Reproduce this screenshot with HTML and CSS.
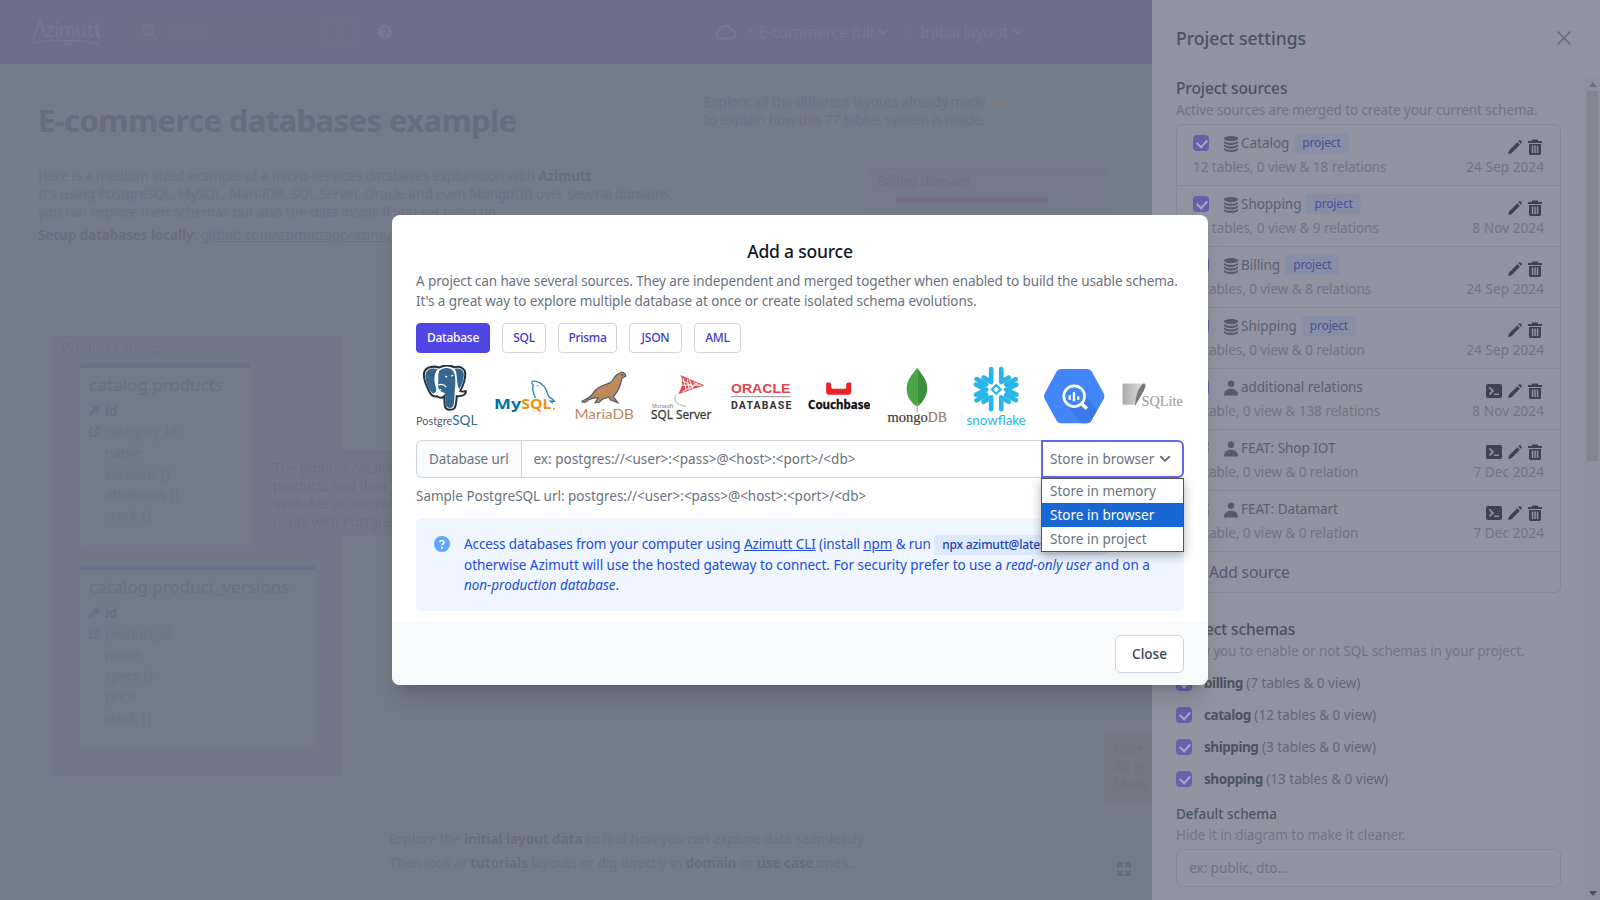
FILE: index.html
```html
<!DOCTYPE html>
<html lang="en">
<head>
<meta charset="utf-8">
<title>Azimutt - E-commerce full</title>
<link rel="stylesheet" href="styles.css">
</head>
<body>
<svg class="defs" width="0" height="0">
  <symbol id="db" viewBox="0 0 14 16"><path d="M0 2.600C0 1.100 3.100 0 7 0s7 1.100 7 2.600S10.900 5.200 7 5.200 0 4.100 0 2.600z"/><path d="M0 4.900c1.400 1.300 4 1.900 7 1.900s5.600-.6 7-1.900v1.300c0 1.500-3.100 2.700-7 2.700S0 7.700 0 6.200z"/><path d="M0 8.400c1.400 1.300 4 1.900 7 1.900s5.600-.6 7-1.900v1.300c0 1.500-3.100 2.700-7 2.700S0 11.200 0 9.700z"/><path d="M0 11.900c1.400 1.300 4 1.900 7 1.900s5.600-.6 7-1.900v1.400C14 14.800 10.900 16 7 16s-7-1.200-7-2.700z"/></symbol>
  <symbol id="user" viewBox="0 0 14 16"><circle cx="7" cy="3.700" r="3.200"/><path d="M0 15.500C0 11 2.800 8.800 7 8.800s7 2.200 7 6.700z"/></symbol>
  <symbol id="pen" viewBox="0 0 16 16"><path d="M12.200 1.300a2 2 0 0 1 2.500 2.500l-.9.9-2.500-2.500zM10.300 3.200l2.500 2.500-8.300 8.600-3.400.8.800-3.300z"/></symbol>
  <symbol id="trash" viewBox="0 0 14 16"><path fill-rule="evenodd" d="M4.300.6h5.400l.6 1.400H14v2H0V2h3.700zM1 5h12v9.300c0 1-.6 1.700-1.600 1.700H2.600C1.600 16 1 15.300 1 14.300zm2.800 1.400v7.600h1.500V6.400zm2.500 0v7.600h1.500V6.400zm2.500 0v7.600h1.500V6.400z"/></symbol>
  <symbol id="term" viewBox="0 0 16 15"><path fill-rule="evenodd" d="M2 .5h12a2 2 0 0 1 2 2v10a2 2 0 0 1-2 2H2a2 2 0 0 1-2-2v-10a2 2 0 0 1 2-2zm.8 4L5.700 7.400l-2.900 2.900 1.200 1.200 4.100-4.100L4 3.300zM8 10v1.600h5V10z"/></symbol>
  <symbol id="chev" viewBox="0 0 12 8"><path d="M1.800 1.700 6 5.900l4.200-4.200" fill="none" stroke="currentColor" stroke-width="2" stroke-linecap="round" stroke-linejoin="round"/></symbol>
  <symbol id="key" viewBox="0 0 12 12"><path d="M7.800.6a3.600 3.600 0 1 1-1 7L5 9.200H3.700v1.300H2.300V12H0V9.500l4.500-4.300A3.600 3.600 0 0 1 7.800.6z"/></symbol>
  <symbol id="link" viewBox="0 0 12 12"><path d="M6 2H1.500v8.500H10V6M7.500 1H11v3.500M11 1 5.500 6.500" fill="none" stroke="currentColor" stroke-width="1.500"/></symbol>
</svg>
<div class="app">
  <div class="workspace">
    <header class="topbar">
      <svg class="brand" viewBox="0 0 70 30"><g fill="none" stroke="currentColor" stroke-width="1.800"><path d="M1 22 8 3l6 18M31 24h9M1 26q16-4 31-2M39 24q15-1 28 4M32 27h7M64 5l3 17"/></g><text x="13" y="20" font-size="21" textLength="56">zimutt</text></svg>
      <div class="search">
        <svg class="i18" viewBox="0 0 18 18"><path d="m11 11 5.500 5.500M12.500 7a5 5 0 1 1-10 0 5 5 0 0 1 10 0z" fill="none" stroke="currentColor" stroke-width="2.400"/></svg>
        <span class="search-text">Search</span><kbd>/</kbd>
      </div>
      <svg class="help" viewBox="0 0 16 16"><path fill="currentColor" d="M8 1a7 7 0 1 0 0 14A7 7 0 0 0 8 1z"/><path d="M5.700 6c.3-3 4.900-2.500 4.500.2C10 7.600 8 7.800 8 9.700M8 11v1.800" fill="none" stroke="#6b6f8b" stroke-width="1.600"/></svg>
      <nav class="crumbs">
        <svg class="cloud" viewBox="0 0 22 18"><path d="M5 15.500a4 4 0 0 1-.6-7.800 6 6 0 0 1 11.600-1 4.500 4.500 0 0 1 1 8.800z" fill="none" stroke="currentColor" stroke-width="2"/></svg>
        <span class="crumb-project">* E-commerce full</span><svg class="cv"><use href="#chev"/></svg>
        <span class="slash">/</span>
        <span>Initial layout</span><svg class="cv"><use href="#chev"/></svg>
      </nav>
    </header>
    <main class="canvas">
      <h1 class="node intro-title">E-commerce databases example</h1>
      <div class="node intro">Here is a medium sized example of a micro-services databases exploration with <b>Azimutt</b>.<br>It's using PostgreSQL, MySQL, MariaDB, SQL Server, Oracle and even MongoDB over several domains,<br>you can explore their schemas but also the data inside if you set them up.</div>
      <div class="node setup"><b>Setup databases locally</b>: <u>github.com/azimuttapp/azimutt</u></div>
      <div class="node layouts">Explore all the different layouts already made <i class="spark"></i><br>to explain how this 77 tables system is made.</div>
      <div class="node group-billing"><span>Billing domain</span><div class="billing-bar"></div></div>
      <div class="node group-catalog"><span>Product catalog</span></div>
      <section class="node table products">
        <h2>catalog.products</h2>
        <p class="col"><svg><use href="#key"/></svg><b>id</b></p>
        <p class="col"><svg><use href="#link"/></svg>category_id</p>
        <p class="col plain">name</p><p class="col plain">versions {}</p><p class="col plain">attributes {}</p><p class="col plain">stock {}</p>
      </section>
      <section class="node table versions">
        <h2>catalog.product_versions</h2>
        <p class="col"><svg><use href="#key"/></svg><b>id</b></p>
        <p class="col"><svg><use href="#link"/></svg>product_id</p>
        <p class="col plain">name</p><p class="col plain">specs {}</p><p class="col plain">price</p><p class="col plain">stock {}</p>
      </section>
      <div class="node memo">The product catalog with<br>products and their versions<br>available on the website is<br>made with PostgreSQL</div>
      <div class="node memo-warm">User<br>All us<br>Made</div>
      <div class="node tips">Explore the <b>initial layout data</b> to find how you can explore data seamlessly.<br>Then look at <b>tutorials</b> layouts or dig directly in <b>domain</b> or <b>use case</b> ones...</div>
      <svg class="node fit" viewBox="0 0 14 14"><path d="M0 0h6v2.500H4L6 5 5 6 2.500 4v2H0zM14 0v6h-2.500V4L9 6 8 5l2-2.500H8V0zM0 14V8h2.500v2L5 8l1 1-2 2.500h2V14zM14 14H8v-2.500h2L8 9l1-1 2.500 2V8H14z" fill="currentColor"/></svg>
    </main>
  </div>

  <aside class="settings">
    <div class="settings-head"><h2>Project settings</h2><svg viewBox="0 0 16 16"><path d="m1.500 1.500 13 13m0-13-13 13" fill="none" stroke="currentColor" stroke-width="1.600"/></svg></div>
    <div class="settings-scroll">
      <div class="settings-body">
        <h3>Project sources</h3>
        <p class="hint">Active sources are merged to create your current schema.</p>
        <div class="sources">
          <div class="source"><div class="line"><i class="check"></i><svg class="kind"><use href="#db"/></svg><span class="name">Catalog</span><em>project</em><span class="acts"><svg class="pen"><use href="#pen"/></svg><svg class="trash"><use href="#trash"/></svg></span></div><div class="meta"><span>12 tables, 0 view &amp; 18 relations</span><span class="date">24 Sep 2024</span></div></div>
          <div class="source"><div class="line"><i class="check"></i><svg class="kind"><use href="#db"/></svg><span class="name">Shopping</span><em>project</em><span class="acts"><svg class="pen"><use href="#pen"/></svg><svg class="trash"><use href="#trash"/></svg></span></div><div class="meta"><span>13 tables, 0 view &amp; 9 relations</span><span class="date">8 Nov 2024</span></div></div>
          <div class="source"><div class="line"><i class="check"></i><svg class="kind"><use href="#db"/></svg><span class="name">Billing</span><em>project</em><span class="acts"><svg class="pen"><use href="#pen"/></svg><svg class="trash"><use href="#trash"/></svg></span></div><div class="meta"><span>7 tables, 0 view &amp; 8 relations</span><span class="date">24 Sep 2024</span></div></div>
          <div class="source"><div class="line"><i class="check"></i><svg class="kind"><use href="#db"/></svg><span class="name">Shipping</span><em>project</em><span class="acts"><svg class="pen"><use href="#pen"/></svg><svg class="trash"><use href="#trash"/></svg></span></div><div class="meta"><span>3 tables, 0 view &amp; 0 relation</span><span class="date">24 Sep 2024</span></div></div>
          <div class="source"><div class="line"><i class="check"></i><svg class="kind"><use href="#user"/></svg><span class="name">additional relations</span><span class="acts"><svg class="term"><use href="#term"/></svg><svg class="pen"><use href="#pen"/></svg><svg class="trash"><use href="#trash"/></svg></span></div><div class="meta"><span>0 table, 0 view &amp; 138 relations</span><span class="date">8 Nov 2024</span></div></div>
          <div class="source"><div class="line"><i class="check off"></i><svg class="kind"><use href="#user"/></svg><span class="name">FEAT: Shop IOT</span><span class="acts"><svg class="term"><use href="#term"/></svg><svg class="pen"><use href="#pen"/></svg><svg class="trash"><use href="#trash"/></svg></span></div><div class="meta"><span>0 table, 0 view &amp; 0 relation</span><span class="date">7 Dec 2024</span></div></div>
          <div class="source"><div class="line"><i class="check off"></i><svg class="kind"><use href="#user"/></svg><span class="name">FEAT: Datamart</span><span class="acts"><svg class="term"><use href="#term"/></svg><svg class="pen"><use href="#pen"/></svg><svg class="trash"><use href="#trash"/></svg></span></div><div class="meta"><span>0 table, 0 view &amp; 0 relation</span><span class="date">7 Dec 2024</span></div></div>
          <div class="add-source">Add source</div>
        </div>
        <h3 class="schemas-title">Project schemas</h3>
        <p class="hint">Allow you to enable or not SQL schemas in your project.</p>
        <div class="schemas">
          <label><i class="check"></i><span><b>billing</b> (7 tables &amp; 0 view)</span></label>
          <label><i class="check"></i><span><b>catalog</b> (12 tables &amp; 0 view)</span></label>
          <label><i class="check"></i><span><b>shipping</b> (3 tables &amp; 0 view)</span></label>
          <label><i class="check"></i><span><b>shopping</b> (13 tables &amp; 0 view)</span></label>
        </div>
        <h4>Default schema</h4>
        <p class="hint">Hide it in diagram to make it cleaner.</p>
        <div class="field">ex: public, dto...</div>
      </div>
      <div class="scrollbar"><i class="up"></i><div class="thumb"></div><i class="down"></i></div>
    </div>
  </aside>
</div>

<div class="modal">
  <div class="modal-body">
    <h2>Add a source</h2>
    <p class="desc">A project can have several sources. They are independent and merged together when enabled to build the usable schema.<br>It's a great way to explore multiple database at once or create isolated schema evolutions.</p>
    <div class="tabs"><span class="tab t-db active">Database</span><span class="tab t-sql">SQL</span><span class="tab t-prisma">Prisma</span><span class="tab t-json">JSON</span><span class="tab t-aml">AML</span></div>
    <div class="logos">
      <svg viewBox="0 0 62 62">
        <path d="M8 8C9 2 17 .5 23 2.500 28 0 34 0 38 2.300c6-1.600 11 1.200 11 6.700 0 7-3 13-5 17 2 1 4 .3 5.500 0 .5 3-3 5.500-9 5-.5 5-.5 9-2 11.500-2 3-8 2.500-9.500-.5-1-3-.5-7-1-11-2 2-5 1.500-7 0-3 1-6 0-8.500-6C10 20 7 13 8 8z" fill="#fff" stroke="#26323c" stroke-width="2"/>
        <path d="M9.500 9C10.500 4 16 2.500 21.500 4 17 10 18 17 20 23c.5 3-.5 5-2.500 5.500C13 27 8.500 15 9.500 9zM23 6c4-4 11-4 14 0 2.500 4 2.500 13 1.500 19-.5 6 0 12-1.500 16-1.500 2.500-6 2-7-.5-1-3-.5-9-1.500-13-4.500 0-7.500-4-6.500-9 .5-4-.5-8 1-12.500zM38.500 4c5-1.500 9 1 9 5.500 0 6-2.500 11-4.500 14.500C39.500 18 42 10 38.500 4z" fill="#336791"/>
        <path d="M25 24c-2 2-5 3-7 5m22-1 7 0M29 11l2 1m4-1 2-1M22 20q5-2 8 2" fill="none" stroke="#fff" stroke-width="1.300"/>
        <text x="0" y="60" font-size="12" textLength="36" lengthAdjust="spacingAndGlyphs" class="lato" fill="#555b66">Postgre</text><text x="36" y="60" font-size="12.500" textLength="25" lengthAdjust="spacingAndGlyphs" class="lato" fill="#336791">SQL</text>
      </svg>
      <svg viewBox="0 0 62 62">
        <path d="M41 33c-1-5-4-8-2-13-2-2-1.500-4 0-4 5 0 10 3 13 9 1 3 1.500 5 3 7 3 1.500 4 3 5 4l-4 0 2.500 2" fill="none" stroke="#2a8aa8" stroke-width="1.400"/><path d="m43 20 1 1" stroke="#2a8aa8"/>
        <text x="0" y="44" font-size="14.500" textLength="27" lengthAdjust="spacingAndGlyphs" class="bold" fill="#0072a3">My</text><text x="27" y="44" font-size="14.500" textLength="30" lengthAdjust="spacingAndGlyphs" class="bold" fill="#f29111">SQL</text><circle cx="59.500" cy="43.500" r="1" fill="#f29111"/>
      </svg>
      <svg viewBox="0 0 62 62">
        <path d="M9 36c2-1.500 7-2 11-8 4-6.500 10-7.500 17-10.500C41 15 41 9 46 8.500c2-2 4-1.500 5.500 0l1 2.500-4 2.500c-1 7-4 13-8.500 18l4.500 6-7.500-3-1-2.500-6 1.500-4 3.500-4 .5 3-4.500c-5-1-9 1-12 3.500-1.500.5-3 1-4 0z" fill="#bf8a5a" stroke="#4e5b6d" stroke-width="1.200"/><circle cx="49" cy="10" r=".8" fill="#333"/>
        <text x="1.500" y="53.500" font-size="14" textLength="59" lengthAdjust="spacingAndGlyphs" class="lato" fill="#c0875f">MariaDB</text>
      </svg>
      <svg viewBox="0 0 62 62">
        <path d="m29 10 24 10-26 9c3-5 6-14 2-19z" fill="#d6525b"/><path d="m32 13 3 12m3-11 4 10m0-7 5 3M30 20l20 0M31 15l10 6-10 6M36 14l2 11M47 17l-8 7" fill="none" stroke="#fff" stroke-width=".9"/><path d="M25 30c-3 5 0 10 10 11" fill="none" stroke="#c9ced4" stroke-width="1.500"/>
        <text x="1" y="42.500" font-size="5.500" textLength="21" lengthAdjust="spacingAndGlyphs" fill="#777">Microsoft</text><text x="0" y="54" font-size="13" textLength="60" lengthAdjust="spacingAndGlyphs" fill="#3b3b3b" stroke="#3b3b3b" stroke-width=".25">SQL Server</text>
      </svg>
      <svg viewBox="0 0 62 62">
        <text x="1" y="27.500" font-size="12" textLength="59" lengthAdjust="spacingAndGlyphs" class="wide" fill="#e8414a">ORACLE</text><path d="M1 31.500h59" stroke="#777" stroke-width=".8"/><text x="1" y="43.500" font-size="10.500" textLength="60" class="narrow" fill="#333">DATABASE</text>
      </svg>
      <svg viewBox="0 0 62 62">
        <path d="M18 18.500c0-1 1-1.300 3-1 2 0 2 2 2 4 0 1.500.5 2 2 2h11c1.500 0 2-.5 2-2 0-2 0-4 2-4 2-.3 3 0 3 1v7c0 3-1 4-3 4H21c-2 0-3-1-3-4z" fill="#ea2328"/>
        <text x="0" y="43.500" font-size="12" textLength="62" lengthAdjust="spacingAndGlyphs" class="bold" fill="#111" stroke="#111" stroke-width=".3">Couchbase</text>
      </svg>
      <svg viewBox="0 0 62 62">
        <path d="M31 2.500c4 7 10 11 10 21 0 7-4 13-10 18z" fill="#3e8f3c"/><path d="M31 2.500C27 9 20.500 14 20.500 23.500S26 38 31 41.500z" fill="#4aa546"/><path d="M31 38v9" stroke="#8fb58a" stroke-width="1"/>
        <text x="1.500" y="57" font-size="14" textLength="40" lengthAdjust="spacingAndGlyphs" class="serif" fill="#493a32" stroke="#493a32" stroke-width=".2">mongo</text><text x="41.500" y="57" font-size="14.500" textLength="19" lengthAdjust="spacingAndGlyphs" class="serif" fill="#947b63" stroke="#947b63" stroke-width=".2">DB</text>
      </svg>
      <svg viewBox="0 0 62 62">
        <g fill="none" stroke="#29b5e8" stroke-width="4.600" stroke-linecap="round" stroke-linejoin="round"><path d="M26 4v13L18.500 12.500M36 4v13l7.500-4.500M26 44V32l-7.500 4.500M36 44V32l7.500 4.500M11.500 14 21 19.500l-9 .5M50.500 14 41 19.500l9 .5M11 19.500l10 5-10 5M51 19.500l-10 5 10 5M11.500 35 21 29.500l-9-.5M50.500 35 41 29.500l9-.5"/></g><circle cx="31" cy="24.500" r="6.500" fill="#fff"/><path d="m31 20 4.300 4.300L31 28.600l-4.300-4.300z" fill="#fff" stroke="#29b5e8" stroke-width="2.200"/>
        <text x="1.500" y="60" font-size="12.500" textLength="59" lengthAdjust="spacingAndGlyphs" class="lato" fill="#29b5e8">snowflake</text>
      </svg>
      <svg viewBox="0 0 62 62">
        <path d="M18 4h26q3 0 4.500 2.500l12 22q1.200 2.500 0 5l-12 21Q47 58 44 58H18q-3 0-4.500-2.500l-12-22q-1.200-2.500 0-5l12-22Q15 4 18 4z" fill="#4386fa"/><path d="m39 24 14.500 21.500-5.500 10-4 2.500h-6L24 40z" fill="#3b79e6"/>
        <circle cx="31" cy="31" r="10.300" fill="#4386fa" stroke="#fff" stroke-width="2.700"/><path d="m38 38 5.500 5.500" stroke="#fff" stroke-width="3.500"/><path d="M26.500 30v4.500M30.800 27v9M35 31v3.500" stroke="#fff" stroke-width="2.400"/>
      </svg>
      <svg viewBox="0 0 62 62">
        <defs><linearGradient id="sq"><stop offset="0" stop-color="#aaa"/><stop offset="1" stop-color="#ddd"/></linearGradient></defs>
        <path d="M2 18.500q-1.500 0-1.500 1.500v18q0 1.500 1.500 1.500h11q1-12 7-21z" fill="url(#sq)"/><path d="M13 41c0-8 3-19 8-22.500 2-.5 3 1 2 3.500-2 6-6 11-10 19z" fill="#777"/>
        <text x="19.500" y="41" font-size="13.500" textLength="41" lengthAdjust="spacingAndGlyphs" class="serif" fill="#a3a3a3" stroke="#a3a3a3" stroke-width=".2">SQLite</text>
      </svg>
    </div>
    <div class="url-row">
      <span class="addon">Database url</span><span class="url">ex: postgres://&lt;user&gt;:&lt;pass&gt;@&lt;host&gt;:&lt;port&gt;/&lt;db&gt;</span>
      <div class="select"><span>Store in browser</span><svg><use href="#chev"/></svg>
        <ul class="options"><li>Store in memory</li><li class="on">Store in browser</li><li>Store in project</li></ul>
      </div>
    </div>
    <p class="sample">Sample PostgreSQL url: postgres://&lt;user&gt;:&lt;pass&gt;@&lt;host&gt;:&lt;port&gt;/&lt;db&gt;</p>
    <div class="info">
      <svg viewBox="0 0 16 16"><circle cx="8" cy="8" r="8" fill="#60a5fa"/><path d="M5.900 6.300C6 3.800 10.200 3.900 10 6.500 9.900 7.900 8 8 8 9.600M8 11v1.700" fill="none" stroke="#fff" stroke-width="1.700"/></svg>
      <div><div class="l1">Access databases from your computer using <u>Azimutt CLI</u> (install <u>npm</u> &amp; run <code>npx azimutt@latest gateway</code>),</div><div class="l2">otherwise Azimutt will use the hosted gateway to connect. For security prefer to use a <i>read-only user</i> and on a</div><div class="l3"><i>non-production database</i>.</div></div>
    </div>
  </div>
  <footer><button>Close</button></footer>
</div>
</body>
</html>
```
FILE: styles.css
```css
* { box-sizing: border-box; margin: 0; padding: 0; }
body { width: 1600px; height: 900px; overflow: hidden; position: relative; font: 13.5px/20px "Noto Sans", sans-serif; letter-spacing: -.1px; color: #5e6676; }
.defs { position: absolute; }
h1, h2, h3, h4 { font-weight: 500; }
.app { display: flex; height: 900px; }
.workspace { width: 1152px; display: flex; flex-direction: column; }

/* top bar */
.topbar { height: 64px; background: #6b6f8b; color: #73778f; display: flex; align-items: center; padding-left: 32px; }
.brand { width: 70px; height: 30px; }
.brand text { fill: currentColor; font-family: Lato, sans-serif; }
.search { display: flex; align-items: center; width: 229px; height: 32px; margin-left: 24px; padding-left: 14px; background: #6b6f8a; border-radius: 6px; color: #727689; }
.i18 { width: 18px; height: 18px; }
.search-text { margin-left: 9px; flex: 1; color: #6f7389; }
kbd { width: 28px; height: 28px; border: 1px solid #6f738a; border-radius: 4px; text-align: center; line-height: 26px; font-family: inherit; color: #6f738a; }
.help { width: 16px; height: 16px; margin-left: 22px; color: #76798c; }
.crumbs { display: flex; align-items: center; margin-left: 322px; font-size: 16px; letter-spacing: -.4px; white-space: nowrap; color: #747890; }
.cloud { width: 22px; height: 18px; margin-right: 9px; }
.cv { width: 12px; height: 8px; margin-left: 4px; }
.slash { margin: 0 11px 0 14px; color: #70748e; }

/* diagram canvas */
.canvas { position: relative; flex: 1; background: #747b89; color: #6c7383; overflow: hidden; }
.node { position: absolute; white-space: nowrap; }
.canvas b { color: #676e7e; font-weight: 700; }
.intro-title { left: 38px; top: 36px; font-size: 31px; line-height: 40px; font-weight: 700; letter-spacing: -.6px; color: #666d7d; }
.intro { left: 38px; top: 103px; line-height: 18px; letter-spacing: -.06px; }
.setup { left: 38px; top: 161px; }
.layouts { left: 704px; top: 29px; line-height: 18px; }
.spark { display: inline-block; width: 8px; height: 8px; margin-left: 8px; background: #807b7c; border-radius: 4px; }
.group-billing { left: 868px; top: 104px; width: 240px; height: 482px; padding: 2px 8px; background: #747a89; border: 1px solid #727889; color: #746f84; font-size: 14px; }
.billing-bar { width: 152px; height: 6px; margin: 6px 0 0 19px; background: #78708b; }
.group-catalog { left: 52px; top: 272px; width: 290px; height: 440px; padding: 1px 9px; background: #727888; border: 1px solid #6f7688; color: #6b7289; }
.table { background: #737a88; border-top: 5px solid #687389; border-radius: 4px; padding: 7px 9px; color: #6e7585; }
.products { left: 80px; top: 299px; width: 170px; height: 187px; }
.versions { left: 80px; top: 501px; width: 235px; height: 184px; }
.table h2 { font-size: 17px; line-height: 20px; margin-bottom: 5px; letter-spacing: -.15px; color: #6a7180; }
.col { display: flex; align-items: center; height: 21px; }
.col b { font-weight: 600; }
.col svg { width: 11px; height: 11px; margin-right: 5px; fill: currentColor; color: #697188; }
.plain { padding-left: 16px; }
.memo { left: 264px; top: 386px; width: 200px; height: 86px; padding: 9px; line-height: 18px; background: #717787; color: #6a7182; }
.memo-warm { left: 1104px; top: 669px; width: 60px; height: 70px; padding: 8px 10px; line-height: 17.500px; background: #767984; color: #6f7481; }
.tips { left: 389px; top: 763px; line-height: 24px; letter-spacing: -.04px; }
.fit { left: 1117px; top: 798px; width: 14px; height: 14px; color: #656c7c; }

/* settings panel */
.settings { width: 448px; background: #9193a0; display: flex; flex-direction: column; color: #686d7c; }
.settings-head { height: 76px; padding: 0 28px 0 24px; display: flex; align-items: center; justify-content: space-between; color: #4b5160; }
.settings-head h2 { font-size: 17.500px; letter-spacing: 0; }
.settings-head svg { width: 16px; height: 16px; color: #666b7a; }
.settings-scroll { display: flex; height: 824px; }
.settings-body { width: 433px; padding: 0 24px; }
h3 { font-size: 15.500px; line-height: 24px; color: #4b5160; }
.settings h3 { letter-spacing: -.1px; }
.hint { line-height: 20px; color: #707583; letter-spacing: -.08px; }
.sources { width: 385px; margin-top: 4px; border: 1px solid #868995; border-radius: 6px; }
.source { height: 61px; padding: 7px 16px 0 16px; border-bottom: 1px solid #868995; }
.line { display: flex; align-items: center; height: 22px; }
.check { flex: none; width: 16px; height: 16px; border-radius: 4px; background: #6461aa; position: relative; }
.check::after { content: ""; position: absolute; left: 4px; top: 4px; width: 8px; height: 5px; border: solid #a9aac0; border-width: 0 0 2.500px 2.500px; transform: rotate(-47deg); }
.off { background: #9193a0; border: 1px solid #7a7e8c; }
.kind { width: 14px; height: 16px; margin: 2px 3px 0 15px; fill: #555b69; }
.name { color: #5b606e; letter-spacing: -.03px; }
.line em { font-style: normal; font-size: 12px; height: 20px; line-height: 20px; padding: 0 8px; margin-left: 5px; border-radius: 3px; background: #868fa6; color: #484f96; letter-spacing: -.15px; }
.acts { margin-left: auto; display: flex; gap: 5px; padding-right: 2px; fill: #3f4350; transform: translateY(4px); }
.acts svg { height: 16px; }
.pen, .term { width: 16px; }
.trash { width: 14px; }
.meta { display: flex; justify-content: space-between; line-height: 20px; margin-top: 3px; color: #707583; letter-spacing: -.05px; }
.date { letter-spacing: .1px; }
.add-source { height: 40px; line-height: 41px; padding-left: 32px; font-size: 15.500px; color: #555a69; }
.schemas-title { margin-top: 24px; }
.schemas { padding: 6px 0; }
.schemas label { display: flex; align-items: center; gap: 12px; height: 32px; color: #626776; letter-spacing: 0; }
.schemas b { color: #4d5362; font-weight: 700; letter-spacing: -.45px; }
h4 { margin-top: 2px; font-size: 13.500px; line-height: 22px; color: #4d5362; letter-spacing: 0; }
.field { width: 385px; height: 38px; margin-top: 4px; padding: 0 12px; line-height: 36px; border: 1px solid #868995; border-radius: 6px; color: #6d7280; letter-spacing: 0; }
.scrollbar { width: 15px; background: #8e909d; padding: 6px 2px 4px; display: flex; flex-direction: column; }
.thumb { width: 11px; height: 370px; margin: 4px 0 auto; background: #82848f; }
.up, .down { width: 0; height: 0; margin-left: 2px; border: 4px solid transparent; }
.up { border-top: 0; border-bottom: 5px solid #6b6e7a; }
.down { border-bottom: 0; border-top: 5px solid #50535f; }

/* modal */
.modal { position: absolute; left: 392px; top: 215px; width: 816px; height: 470px; background: #fff; border-radius: 8px; overflow: visible; box-shadow: 0 20px 25px -5px rgba(0,0,0,.12), 0 8px 10px -6px rgba(0,0,0,.15); color: #6b7280; display: flex; flex-direction: column; }
.modal-body { height: 408px; padding: 24px 24px 0; }
.modal h2 { font-size: 17.500px; line-height: 24px; text-align: center; color: #111827; letter-spacing: -.2px; }
.desc { margin-top: 8px; white-space: nowrap; line-height: 20px; height: 40px; }
.tabs { display: flex; gap: 12px; margin-top: 12px; }
.tab { height: 30px; line-height: 28px; border: 1px solid #d1d5db; border-radius: 4px; text-align: center; font-size: 12px; font-weight: 500; color: #4338ca; letter-spacing: -.25px; }
.tab.active { background: #4f46e5; border-color: #4f46e5; color: #fff; }
.t-db { width: 74px; } .t-sql { width: 44px; } .t-prisma { width: 59px; } .t-json { width: 53px; } .t-aml { width: 47px; }
.logos { display: grid; grid-template-columns: repeat(10, 1fr); gap: 16px; margin-top: 12px; height: 62.400px; letter-spacing: 0; }
.logos svg { width: 100%; height: 62.400px; }
.lato { font-family: Lato, sans-serif; }
.bold { font-weight: 700; }
.wide { font-family: "Liberation Sans", sans-serif; font-weight: 700; }
.narrow { font-family: "Liberation Sans Narrow", Roboto, sans-serif; font-weight: 700; }
.serif { font-family: "Liberation Serif", serif; }
.url-row { display: flex; height: 38px; margin-top: 12.600px; line-height: 36px; }
.addon { width: 104.500px; padding-left: 12px; border: 1px solid #d1d5db; border-right: 0; background: #f9fafb; border-radius: 6px 0 0 6px; }
.url { flex: 1; padding-left: 12px; border: 1px solid #d1d5db; border-right: 0; letter-spacing: .03px; }
.select { position: relative; width: 143px; height: 38px; line-height: 34px; padding-left: 7px; border: 2px solid #6366f1; border-radius: 0 6px 6px 0; display: flex; align-items: center; white-space: nowrap; letter-spacing: .02px; }
.select svg { width: 12px; height: 8px; margin-left: 5px; }
.options { position: absolute; left: -2px; top: 36px; width: 143px; border: 1px solid #555; background: #fff; list-style: none; line-height: 24px; box-shadow: 0 4px 10px rgba(0,0,0,.3); }
.options li { height: 24px; padding-left: 8px; }
.options .on { background: #1967d2; color: #fff; }
.sample { margin-top: 8px; line-height: 20px; letter-spacing: -.02px; }
.info { margin-top: 12px; height: 93px; padding: 16px; display: flex; gap: 14px; background: #eff6ff; border-radius: 6px; color: #1d4ed8; white-space: nowrap; letter-spacing: -.04px; }
.info > svg { flex: none; width: 16px; height: 16px; margin: 2px 0 0 2px; }
.l1 { height: 21px; display: block; letter-spacing: -.11px; }
.info code { font: 500 12px/20px "Noto Sans", sans-serif; display: inline-block; padding: 0 8px; background: #dbeafe; color: #1e40af; border-radius: 3px; letter-spacing: -.17px; }
.modal footer { height: 62px; padding: 12px 24px; background: #f9fafb; border-radius: 0 0 8px 8px; display: flex; justify-content: flex-end; }
.modal button { width: 69px; height: 38px; background: #fff; border: 1px solid #d1d5db; border-radius: 6px; font: 500 13.500px "Noto Sans", sans-serif; color: #374151; }
```
